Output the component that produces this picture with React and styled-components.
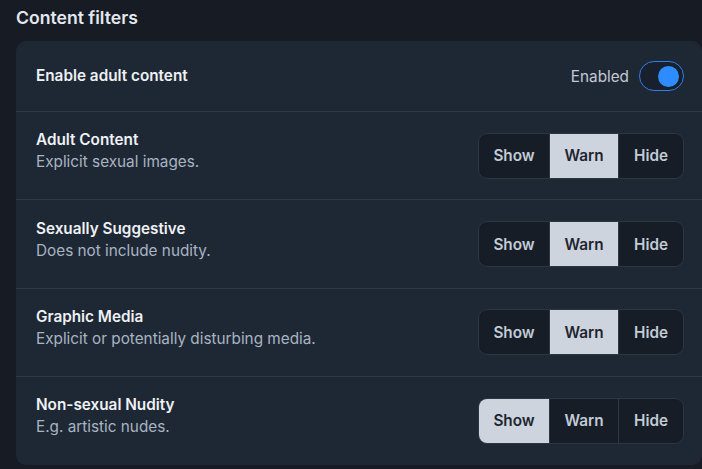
import React from "react";
import styled, { createGlobalStyle } from "styled-components";

const Global = createGlobalStyle`
  body {
    margin: 0;
    background: #161b24;
    font-family: Inter, "Noto Sans", sans-serif;
    color: #e6eaf0;
  }
`;

const Page = styled.div`
  padding: 6px 0 6px 16px;
`;

const Heading = styled.h2`
  margin: 0 0 11px 0;
  font-size: 17.6px;
  line-height: 24px;
  font-weight: 600;
  color: #e4e8ee;
`;

const Card = styled.div`
  background: #1e2834;
  border-radius: 10px;
  overflow: hidden;
`;

const Row = styled.div`
  display: flex;
  align-items: center;
  justify-content: space-between;
  height: ${(p) => (p.$short ? 70 : 88.4)}px;
  padding: 0 18px 0 20px;
  border-top: ${(p) => (p.$first ? "none" : "1px solid #2e3947")};
  box-sizing: border-box;
`;

const Text = styled.div`
  display: flex;
  flex-direction: column;
  margin-bottom: ${(p) => (p.$lift ? 9 : 0)}px;
`;

const Title = styled.div`
  font-size: 15.3px;
  line-height: 22px;
  font-weight: 600;
  color: #eef1f5;
`;

const Desc = styled.div`
  font-size: 15.3px;
  line-height: 22px;
  color: #a9b4c2;
`;

const ToggleWrap = styled.div`
  display: flex;
  align-items: center;
  gap: 10px;
  font-size: 15.3px;
  color: #c2cad5;
`;

const Track = styled.div`
  width: 45px;
  height: 30px;
  box-sizing: border-box;
  border: 1.5px solid #2f7fe8;
  border-radius: 15px;
  background: #17202c;
  display: flex;
  align-items: center;
  justify-content: flex-end;
  padding-right: 4px;
`;

const Knob = styled.div`
  width: 21px;
  height: 21px;
  border-radius: 50%;
  background: #2d8cff;
`;

const Segmented = styled.div`
  display: flex;
  flex-shrink: 0;
  height: 46px;
  border: 1px solid #2c3644;
  border-radius: 9px;
  background: #161d27;
  overflow: hidden;
  box-sizing: border-box;
`;

const Seg = styled.div`
  box-sizing: border-box;
  flex: 0 0 ${(p) => p.$w}px;
  display: flex;
  align-items: center;
  justify-content: center;
  font-size: 15.3px;
  font-weight: 600;
  background: ${(p) => (p.$active ? "#cdd4dd" : "transparent")};
  color: ${(p) => (p.$active ? "#1d2530" : "#c3cbd6")};
  & + & {
    border-left: ${(p) => (p.$noline ? "none" : "1px solid #2c3644")};
  }
`;

const filters = [
  { title: "Adult Content", desc: "Explicit sexual images.", value: "Warn" },
  { title: "Sexually Suggestive", desc: "Does not include nudity.", value: "Warn" },
  { title: "Graphic Media", desc: "Explicit or potentially disturbing media.", value: "Warn" },
  { title: "Non-sexual Nudity", desc: "E.g. artistic nudes.", value: "Show" },
];

const options = [
  { label: "Show", w: 70 },
  { label: "Warn", w: 69 },
  { label: "Hide", w: 65 },
];

export default function App() {
  return (
    <Page>
      <Global />
      <Heading>Content filters</Heading>
      <Card>
        <Row $short $first>
          <Title>Enable adult content</Title>
          <ToggleWrap>
            Enabled
            <Track>
              <Knob />
            </Track>
          </ToggleWrap>
        </Row>
        {filters.map((f) => (
          <Row key={f.title}>
            <Text $lift>
              <Title>{f.title}</Title>
              <Desc>{f.desc}</Desc>
            </Text>
            <Segmented>
              {options.map((o, i) => {
                const active = o.label === f.value;
                const prevActive = i > 0 && options[i - 1].label === f.value;
                return (
                  <Seg key={o.label} $w={o.w} $active={active} $noline={active || prevActive}>
                    {o.label}
                  </Seg>
                );
              })}
            </Segmented>
          </Row>
        ))}
      </Card>
    </Page>
  );
}
